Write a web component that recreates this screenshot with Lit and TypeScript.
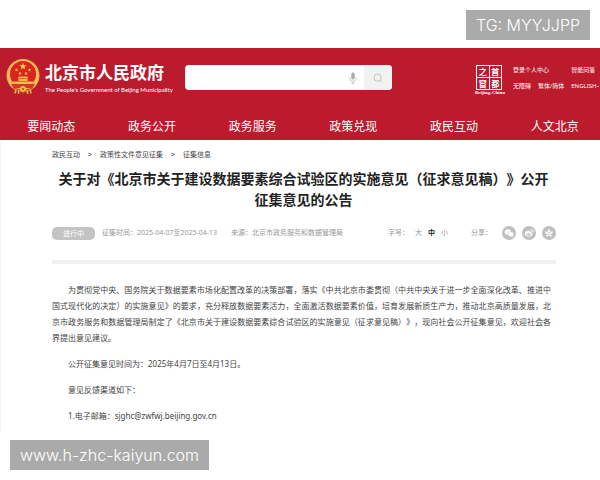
import { LitElement, html, css, svg } from "lit";
import { customElement } from "lit/decorators.js";

const NAV = ["要闻动态", "政务公开", "政务服务", "政策兑现", "政民互动", "人文北京"];

const star = (cx: number, cy: number, r: number) => {
  const pts: string[] = [];
  for (let i = 0; i < 10; i++) {
    const a = -Math.PI / 2 + (i * Math.PI) / 5;
    const k = i % 2 ? r * 0.4 : r;
    pts.push(`${(cx + k * Math.cos(a)).toFixed(2)},${(cy + k * Math.sin(a)).toFixed(2)}`);
  }
  return svg`<polygon points=${pts.join(" ")} fill="#f6c543"></polygon>`;
};

const emblem = html`<svg class="emblem" viewBox="0 0 68 72" aria-hidden="true">
  <circle cx="34" cy="33" r="33" fill="#efb44a"></circle>
  <circle cx="34" cy="33" r="29" fill="none" stroke="#f8d27a" stroke-width="2" stroke-dasharray="4 2"></circle>
  <circle cx="34" cy="30" r="26" fill="#d9241f"></circle>
  <path d="M10 50 H58 L52 60 L42 58 H26 L16 60Z" fill="#d5382a"></path>
  <path d="M18 58 L17 67 L27 64 L34 70 L41 64 L51 67 L50 58 L42 61 H26Z" fill="#d5382a"></path>
  <path d="M20 60 L18 69 M48 60 L50 69 M25 62 L25 70 M43 62 L43 70" stroke="#eeb345" stroke-width="3"></path>
  ${star(34, 15, 8)} ${star(21, 22, 4)} ${star(47, 22, 4)} ${star(28, 29, 4)} ${star(40, 29, 4)}
  <path d="M23 39 L26 35 H42 L45 39Z M25 40 H43 V44 H25Z M14 45 H54 V50 H14Z" fill="#f3b94a"></path>
  <circle cx="34" cy="60" r="6" fill="#f3b94a"></circle>
  <circle cx="34" cy="60" r="2" fill="#d5382a"></circle>
</svg>`;

@customElement("app-root")
export class AppRoot extends LitElement {
  static styles = css`
    :host {
      display: block;
      position: relative;
      min-height: 100vh;
      box-sizing: border-box;
      padding-top: 48px;
      background: #fff;
      color: #444;
      font: 8px/16px "Noto Sans", "Noto Sans CJK SC", sans-serif;
      text-spacing-trim: space-all;
      overflow: hidden;
    }
    a { color: inherit; text-decoration: none; }
    button { font: inherit; color: inherit; border: 0; padding: 0; margin: 0; background: none; }
    svg { display: block; }
    p, h1 { margin: 0; padding: 0; }

    .header { background: #bb1b2d; color: #fff; }
    .top { display: flex; align-items: flex-start; height: 66px; padding-left: 6px; }
    .brand { display: flex; gap: 5px; padding-top: 11px; width: 179px; }
    .emblem { flex: none; width: 34px; height: 36px; }
    .name { font-size: 17px; line-height: 27px; font-weight: 700; white-space: nowrap; }
    .english { font-size: 6px; line-height: 8px; font-family: Lato, sans-serif; white-space: nowrap; }

    .search { display: flex; flex: 0 1 207px; min-width: 0; height: 25px; margin-top: 17px; border-radius: 4px; overflow: hidden; background: #fff; }
    .field { flex: 1; min-width: 0; border: 0; outline: 0; background: none; padding: 0 8px; font: inherit; }
    .mic { width: 22px; display: grid; place-items: center; }
    .go { width: 28px; display: grid; place-items: center; background: #f2f2f3; }
    .mic svg { width: 8px; height: 12px; }
    .go svg { width: 10px; height: 10px; }

    .seal { margin: 17px 0 0 auto; width: 28px; }
    .grid { display: grid; grid-template-columns: 1fr 1fr; gap: 1px; margin: 0 1px; border: 1px solid #fff; background: #fff; font: 700 8px/11px "Noto Sans CJK SC", sans-serif; text-align: center; }
    .grid span { background: #bb1b2d; height: 11px; }
    .caption { font: 700 5px/5px "Liberation Serif", serif; text-align: center; white-space: nowrap; }

    .links { display: grid; grid-template-columns: auto auto auto; justify-content: start; column-gap: 7px; margin: 14px 0 0 10px; width: 87px; font-size: 6px; line-height: 16px; white-space: nowrap; }
    .wide { grid-column: span 2; }
    .lang { display: flex; align-items: center; gap: 1px; }
    .lang::after { content: ""; border: 1px solid transparent; border-top-color: #fff; border-bottom: 0; }
    .nav { display: grid; grid-template-columns: repeat(6, 1fr); padding-left: 1px; margin-right: -5px; font-size: 12px; line-height: 26px; text-align: center; }

    .article { border-left: 1px solid #f2f2f2; padding: 7px 44px 7px 51px; margin-top: 1px; }
    .crumbs { display: flex; gap: 8px; font-size: 7px; line-height: 14px; color: #444; }
    .title { margin-top: 6px; font-size: 14px; line-height: 21px; font-weight: 700; color: #222; text-align: center; padding: 0 5px 0 4px; }
    .meta { display: flex; align-items: center; margin-top: 16px; font-size: 7px; line-height: 14px; color: #999; white-space: nowrap; }
    .badge { width: 43px; border-radius: 5px; background: #c4c4c4; color: #fff; line-height: 13px; text-align: center; margin-right: 7px; }
    .source { margin-left: 14px; }
    .sizes { display: flex; gap: 6px; margin-left: auto; }
    .active { color: #222; font-weight: 700; }
    .share { display: flex; align-items: center; gap: 6px; margin-left: 23px; }
    .share span { margin-right: 4px; }
    .share svg { width: 14px; height: 14px; }

    .body { border-top: 4px solid #f1f1f1; margin-top: 20px; padding: 18px 5px 0 0; }
    .body p { text-indent: 2em; text-align: justify; margin-bottom: 10px; }
    .body p:last-child { margin-bottom: 0; }

    .mark { position: absolute; background: #aaa; color: #fff; height: 30px; padding: 0 10px; font: 300 16px/30px Inter, sans-serif; white-space: nowrap; }
    .tag { top: 10px; right: 10px; }
    .site { left: 10px; bottom: 10px; }
  `;

  render() {
    return html`
      <header class="header">
        <div class="top">
          <a class="brand" href="#">
            ${emblem}
            <div>
              <div class="name">北京市人民政府</div>
              <div class="english">The People's Government of Beijing Municipality</div>
            </div>
          </a>
          <form class="search" role="search">
            <input class="field" type="text" aria-label="搜索" />
            <button class="mic" type="button" aria-label="语音">
              <svg viewBox="0 0 8 12"><rect x="2.3" y="0.5" width="3.4" height="7" rx="1.7" fill="#aaa"></rect><path d="M1 5v1.3a3 3 0 0 0 6 0V5M4 9.3v2M2.2 11.3h3.6" fill="none" stroke="#bbb" stroke-width=".8"></path></svg>
            </button>
            <button class="go" type="button" aria-label="搜索">
              <svg viewBox="0 0 10 10" fill="none" stroke="#bcbcbc" stroke-width=".9"><circle cx="4.6" cy="4.6" r="3.6"></circle><path d="M7.2 7.2 9.2 9.2"></path></svg>
            </button>
          </form>
          <a class="seal" href="#">
            <div class="grid"><span>之</span><span>首</span><span>窗</span><span>都</span></div>
            <div class="caption">Beijing-China</div>
          </a>
          <div class="links">
            <a class="wide" href="#">登录个人中心</a><a href="#">智能问答</a>
            <a href="#">无障碍</a><a href="#">繁体/简体</a><a class="lang" href="#">ENGLISH</a>
          </div>
        </div>
        <nav class="nav">${NAV.map((n) => html`<a href="#">${n}</a>`)}</nav>
      </header>
      <main class="article">
        <nav class="crumbs">
          <a href="#">政民互动</a><span>&gt;</span><a href="#">政策性文件意见征集</a><span>&gt;</span><a href="#">征集信息</a>
        </nav>
        <h1 class="title">关于对《北京市关于建设数据要素综合试验区的实施意见（征求意见稿）》公开征集意见的公告</h1>
        <div class="meta">
          <span class="badge">进行中</span>
          <span>征集时间：2025-04-07至2025-04-13</span>
          <span class="source">来源：北京市政务服务和数据管理局</span>
          <div class="sizes">
            <span>字号：</span><button>大</button><button class="active">中</button><button>小</button>
          </div>
          <div class="share">
            <span>分享：</span>
            <button aria-label="微信"><svg viewBox="0 0 14 14"><circle cx="7" cy="7" r="7" fill="#bfbfbf"></circle><path d="M6 3.2c-2 0-3.4 1.2-3.4 2.7 0 .9.5 1.6 1.2 2.1l-.3 1.2 1.3-.7 1 .2C5.700 6.700 7 5.500 9.200 5.500 8.900 4.100 7.600 3.200 6 3.200Z" fill="#fff"></path><path d="M9 6.100c-1.600 0-2.800 1-2.800 2.200s1.200 2.200 2.800 2.200l.9-.1 1 .6-.2-1c.6-.4 1-1 1-1.700C11.700 7.100 10.500 6.100 9 6.100Z" fill="#fff"></path></svg></button>
            <button aria-label="微博"><svg viewBox="0 0 14 14"><circle cx="7" cy="7" r="7" fill="#bfbfbf"></circle><path d="M6.300 4.600C4.500 4.800 2.600 6.700 2.700 8.300c.1 1.500 1.900 2.500 3.900 2.400 2.100-.1 3.900-1.300 3.900-2.700 0-.8-.7-1.200-1.400-1.400.4-1-.7-1.300-2-.8.2-.8-.1-1.200-.8-1.200Z" fill="#fff"></path><ellipse cx="6.400" cy="8.400" rx="2.400" ry="1.500" fill="#bfbfbf"></ellipse><circle cx="6" cy="8.500" r=".8" fill="#fff"></circle><path d="M8.500 3.200a2.600 2.600 0 0 1 2.900 3.300M8.600 4.600a1.200 1.200 0 0 1 1.400 1.500" fill="none" stroke="#fff" stroke-width=".7"></path></svg></button>
            <button aria-label="QQ空间"><svg viewBox="0 0 14 14"><circle cx="7" cy="7" r="7" fill="#bfbfbf"></circle><path d="M7 2.500 8.300 5.400 11.500 5.700 9.100 7.900 9.800 11 7 9.400 4.200 11 4.900 7.900 2.500 5.700 5.700 5.400Z" fill="#fff"></path><path d="M5.300 6.300H8.500L5.600 8.400H8.900" fill="none" stroke="#bfbfbf" stroke-width=".6"></path></svg></button>
          </div>
        </div>
        <div class="body">
          <p>为贯彻党中央、国务院关于数据要素市场化配置改革的决策部署，落实《中共北京市委贯彻（中共中央关于进一步全面深化改革、推进中国式现代化的决定）的实施意见》的要求，充分释放数据要素活力，全面激活数据要素价值，培育发展新质生产力，推动北京高质量发展，北京市政务服务和数据管理局制定了《北京市关于建设数据要素综合试验区的实施意见（征求意见稿）》，现向社会公开征集意见，欢迎社会各界提出意见建议。</p>
          <p>公开征集意见时间为：2025年4月7日至4月13日。</p>
          <p>意见反馈渠道如下：</p>
          <p>1.电子邮箱：sjghc@zwfwj.beijing.gov.cn</p>
        </div>
      </main>
      <div class="mark tag">TG: MYYJJPP</div>
      <div class="mark site">www.h-zhc-kaiyun.com</div>
    `;
  }
}
